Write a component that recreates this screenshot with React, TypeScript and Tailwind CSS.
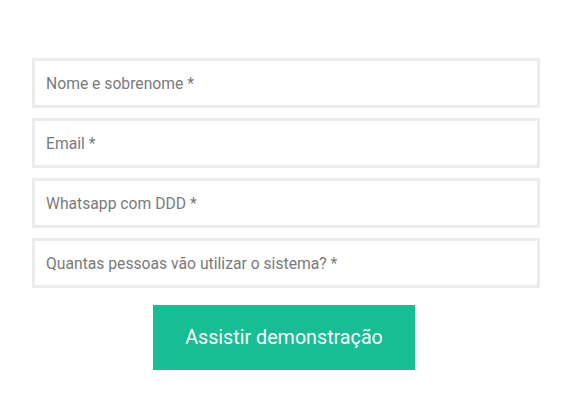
export default function App() {
  const fields = [
    "Nome e sobrenome *",
    "Email *",
    "Whatsapp com DDD *",
    "Quantas pessoas vão utilizar o sistema? *",
  ];

  return (
    <div className="min-h-[420px] bg-white font-['Roboto',sans-serif]">
      <form className="ml-[32px] w-[508px] pt-[58px] flex flex-col gap-[10px]">
        {fields.map((f) => (
          <input
            key={f}
            placeholder={f}
            className="h-[50px] w-full border-[3px] border-[#ececec] bg-white px-[11px] text-[15.7px] text-[#555] placeholder:text-[#7a7a7a] outline-none"
          />
        ))}
        <div className="flex justify-center pt-[7px] pr-[4px]">
          <button
            type="button"
            className="h-[65px] w-[262px] bg-[#17bd93] text-[19.7px] text-white"
          >
            Assistir demonstração
          </button>
        </div>
      </form>
    </div>
  );
}
